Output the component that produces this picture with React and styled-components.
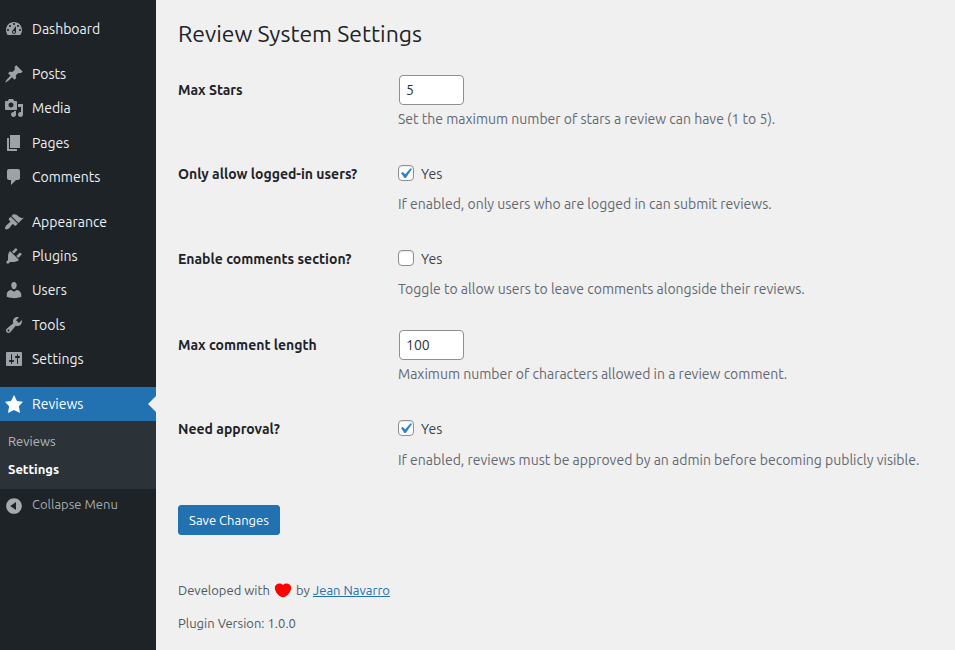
import React from 'react';
import styled, { createGlobalStyle, css } from 'styled-components';

const GlobalStyle = createGlobalStyle`
  *, *::before, *::after { box-sizing: border-box; }
  body {
    margin: 0;
    background: #f0f0f1;
    color: #3c434a;
    font-family: Ubuntu, "Noto Sans", sans-serif;
    font-size: 13px;
    line-height: 1.4;
  }
`;

const Page = styled.div`
  display: flex;
  height: 650px;
  overflow: hidden;
`;

/* ---- sidebar ---- */

const Sidebar = styled.nav`
  flex: 0 0 156px;
  padding-top: 12px;
  background: #1d2327;
`;

const MenuGroup = styled.div`
  margin-bottom: 11px;
`;

const MenuItem = styled.a`
  position: relative;
  display: flex;
  height: 34.2px;
  padding: 8px 0 8px 4px;
  gap: 8px;
  color: #f0f0f1;
  font-size: 14px;
  line-height: 18.2px;

  svg {
    flex: none;
    margin-top: -1px;
    fill: #9ca2a7;
  }

  ${({ $active }) =>
    $active &&
    css`
      background: #2271b1;
      color: #fff;

      svg { fill: #fff; }

      &::after {
        content: "";
        position: absolute;
        right: 0;
        top: 50%;
        margin-top: -8px;
        border: 8px solid transparent;
        border-left-width: 0;
        border-right-color: #f0f0f1;
      }
    `}
`;

const Submenu = styled.div`
  padding: 6px 0;
  background: #2c3338;
`;

const SubmenuItem = styled.a`
  display: block;
  padding: 5px 8px;
  font-size: 13px;
  line-height: 18.2px;
  color: ${({ $current }) => ($current ? '#fff' : '#b4b7b9')};
  font-weight: ${({ $current }) => ($current ? 600 : 400)};
`;

const CollapseButton = styled.button`
  display: flex;
  gap: 8px;
  width: 100%;
  height: 34px;
  padding: 6px 0 0 4px;
  border: 0;
  background: none;
  color: #a7aaad;
  font: 13px/18.2px Ubuntu, "Noto Sans", sans-serif;
  text-align: left;

  svg {
    flex: none;
    margin-top: 1px;
    fill: #a7aaad;
  }
`;

/* ---- content ---- */

const Content = styled.main`
  flex: 1;
  padding: 10px 0 0 22px;
`;

const Title = styled.h1`
  margin: 0;
  padding: 9px 0 4px;
  color: #1d2327;
  font-size: 23px;
  font-weight: 400;
  line-height: 29.9px;
`;

const SettingsForm = styled.form`
  display: grid;
  grid-template-rows: 84px 85px 86px 84px 85px;
  padding-top: 8px;
`;

const Row = styled.div`
  display: grid;
  grid-template-columns: 220px 1fr;
`;

const RowLabel = styled.div`
  padding-top: 20px;
  color: #1d2327;
  font-size: 14px;
  font-weight: 600;
  line-height: 18.2px;
`;

const Field = styled.div`
  padding-top: 14px;
  font-size: 14px;
  line-height: 21px;
`;

const NumberInput = styled.input`
  display: block;
  width: 65px;
  height: 30px;
  margin: 0 1px;
  padding: 0 6px;
  border: 1px solid #8c8f94;
  border-radius: 4px;
  outline: 0;
  background: #fff;
  color: #2c3338;
  font: 14px/28px Ubuntu, "Noto Sans", sans-serif;
`;

const CheckLabel = styled.label`
  display: flex;
  gap: 7px;
  padding-top: 6px;
  line-height: 18px;
`;

const CheckBox = styled.span`
  flex: none;
  width: 16px;
  height: 16px;
  border: 1px solid #8c8f94;
  border-radius: 4px;
  background: #fff;
  box-shadow: inset 0 1px 2px rgba(0, 0, 0, 0.1);

  svg {
    display: block;
    margin: -3px 0 0 -4px;
    fill: #3582c4;
  }
`;

const Description = styled.p`
  margin: ${({ $gap }) => $gap}px 0 0;
  color: #646970;
  font-size: 14px;
  line-height: 21px;
  white-space: nowrap;
`;

const SaveButton = styled.button`
  display: block;
  width: 102px;
  height: 30px;
  margin-top: 20px;
  padding: 0;
  border: 1px solid #2271b1;
  border-radius: 3px;
  background: #2271b1;
  color: #fff;
  font: 13px/28px Ubuntu, "Noto Sans", sans-serif;
`;

const Credits = styled.footer`
  display: grid;
  gap: 13px;
  margin-top: 45px;
  color: #50575e;
`;

const CreditLine = styled.div`
  display: flex;
  align-items: center;
  height: 20px;
  line-height: 20px;
  white-space: pre;

  svg { margin: 2px 4px 0 4px; }
`;

const AuthorLink = styled.a`
  color: #2271b1;
  text-decoration: underline;
`;

const icons = {
  dashboard: 'M3.76 16h12.48c1.1-1.37 1.76-3.11 1.76-5 0-4.42-3.58-8-8-8s-8 3.58-8 8c0 1.89.66 3.63 1.76 5zM10 4c.55 0 1 .45 1 1s-.45 1-1 1-1-.45-1-1 .45-1 1-1zM6 6c.55 0 1 .45 1 1s-.45 1-1 1-1-.45-1-1 .45-1 1-1zm8 0c.55 0 1 .45 1 1s-.45 1-1 1-1-.45-1-1 .45-1 1-1zm-5.37 5.55L12 7v6c0 1.1-.9 2-2 2s-2-.9-2-2c0-.57.24-1.08.63-1.45zM4 10c.55 0 1 .45 1 1s-.45 1-1 1-1-.45-1-1 .45-1 1-1zm12 0c.55 0 1 .45 1 1s-.45 1-1 1-1-.45-1-1 .45-1 1-1zm-5 3c0-.55-.45-1-1-1s-1 .45-1 1 .45 1 1 1 1-.45 1-1z',
  post: 'M10.44 3.02l1.82-1.82 6.36 6.35-1.83 1.82c-1.05-.68-2.48-.57-3.41.36l-.75.75c-.92.93-1.04 2.35-.35 3.41l-1.83 1.82-2.41-2.41-2.8 2.79c-.42.42-3.38 2.71-3.8 2.29s1.86-3.39 2.28-3.81l2.79-2.79L4.1 9.36l1.83-1.82c1.05.69 2.48.57 3.4-.36l.75-.75c.93-.92 1.05-2.35.36-3.41z',
  media: 'M13 11V4c0-.55-.45-1-1-1h-1.67L9 1H5L3.67 3H2c-.55 0-1 .45-1 1v7c0 .55.45 1 1 1h10c.55 0 1-.45 1-1zM7 4.5c1.38 0 2.5 1.12 2.5 2.5S8.38 9.5 7 9.5 4.5 8.38 4.5 7 5.62 4.5 7 4.5zM14 6h5v10.5c0 1.38-1.12 2.5-2.5 2.5S14 17.88 14 16.5s1.12-2.5 2.5-2.5c.17 0 .34.02.5.05V9h-3V6zm-4 8.05V13h2v3.5c0 1.38-1.12 2.5-2.5 2.5S7 17.88 7 16.5 8.12 14 9.5 14c.17 0 .34.02.5.05z',
  page: 'M6 15V2h10v13H6zm-1 1h8v2H3V5h2v11z',
  comments: 'M5 2h9c1.1 0 2 .9 2 2v7c0 1.1-.9 2-2 2h-2l-5 5v-5H5c-1.1 0-2-.9-2-2V4c0-1.1.9-2 2-2z',
  appearance: 'M14.48 11.06L7.41 3.99l1.5-1.5c.5-.56 2.3-.47 3.51.32 1.21.8 1.43 1.28 2.91 2.1 1.18.64 2.45 1.26 4.45.85zm-.71.71L6.7 4.7 4.93 6.47c-.39.39-.39 1.02 0 1.41l1.06 1.06c.39.39.39 1.03 0 1.42-.6.6-1.43 1.11-2.21 1.69-.35.26-.7.53-1.01.84C1.43 14.23.4 16.08 1.4 17.07c.99 1 2.84-.03 4.18-1.36.31-.31.58-.66.85-1.02.57-.78 1.08-1.61 1.69-2.21.39-.39 1.02-.39 1.41 0l1.06 1.06c.39.39 1.02.39 1.41 0z',
  plugins: 'M13.11 4.36L9.87 7.6 8 5.73l3.24-3.24c.35-.34 1.05-.2 1.56.32.52.51.66 1.21.31 1.55zm-8 1.77l.91-1.12 9.01 9.01-1.19.84c-.71.71-2.63 1.16-3.82 1.16H6.14L4.9 17.26c-.59.59-1.54.59-2.12 0-.59-.58-.59-1.53 0-2.12l1.24-1.24v-3.88c0-1.13.4-3.19 1.09-3.89zm7.26 3.97l3.24-3.24c.34-.35 1.04-.21 1.55.31.52.51.66 1.21.31 1.55l-3.24 3.25z',
  users: 'M10 9.25c-2.27 0-2.73-3.44-2.73-3.44C7 4.02 7.82 2 9.97 2c2.16 0 2.98 2.02 2.71 3.81 0 0-.41 3.44-2.68 3.44zm0 2.57L12.72 10c2.39 0 4.52 2.33 4.52 4.53v2.49s-3.65 1.13-7.24 1.13c-3.65 0-7.24-1.13-7.24-1.13v-2.49c0-2.25 1.94-4.48 4.47-4.48z',
  tools: 'M16.68 9.77c-1.34 1.34-3.3 1.67-4.95.99l-5.41 6.52c-.99.99-2.59.99-3.58 0s-.99-2.59 0-3.57l6.52-5.42c-.68-1.65-.35-3.61.99-4.95 1.28-1.28 3.12-1.62 4.72-1.06l-2.89 2.89 2.82 2.82 2.86-2.87c.53 1.58.18 3.39-1.08 4.65zM3.81 16.21c.4.39 1.04.39 1.43 0 .4-.4.4-1.04 0-1.43-.39-.4-1.03-.4-1.43 0-.39.39-.39 1.03 0 1.43z',
  settings: 'M18 16V4c0-.55-.45-1-1-1H3c-.55 0-1 .45-1 1v12c0 .55.45 1 1 1h14c.55 0 1-.45 1-1zM8 11h1c.55 0 1 .45 1 1s-.45 1-1 1H8v1.5c0 .28-.22.5-.5.5s-.5-.22-.5-.5V13H6c-.55 0-1-.45-1-1s.45-1 1-1h1V5.5c0-.28.22-.5.5-.5s.5.22.5.5V11zm5-2h-1c-.55 0-1-.45-1-1s.45-1 1-1h1V5.5c0-.28.22-.5.5-.5s.5.22.5.5V7h1c.55 0 1 .45 1 1s-.45 1-1 1h-1v5.5c0 .28-.22.5-.5.5s-.5-.22-.5-.5V9z',
  star: 'M10 1l3 6 6 .75-4.12 4.62L16 19l-6-3-6 3 1.13-6.63L1 7.75 7 7z',
  collapse: 'M10 2.16c4.33 0 7.84 3.51 7.84 7.84s-3.51 7.84-7.84 7.84S2.16 14.33 2.16 10 5.71 2.16 10 2.16zm2 11.72V6.12L6.18 9.97z',
  check: 'M14.83 4.89l1.34.94-5.81 8.38H9.02L5.78 9.67l1.34-1.25 2.57 2.4z',
};

const Icon = ({ name, size = 20 }) => (
  <svg width={size} height={size} viewBox="0 0 20 20" fillRule="evenodd" aria-hidden="true">
    <path d={icons[name]} />
  </svg>
);

const Heart = () => (
  <svg width="18" height="15" viewBox="0 0 18 15" aria-hidden="true">
    <path
      fill="#f00"
      d="M9 1.9C10.1.8 11.600.4 13 .5c2.500.2 4.300 2.200 4.200 4.600C17.100 9 12.800 14.300 9 14.300S.9 9 .8 5.100C.7 2.700 2.500.7 5 .5c1.400-.1 2.900.3 4 1.400z"
    />
  </svg>
);

const menu = [
  [['dashboard', 'Dashboard']],
  [
    ['post', 'Posts'],
    ['media', 'Media'],
    ['page', 'Pages'],
    ['comments', 'Comments'],
  ],
  [
    ['appearance', 'Appearance'],
    ['plugins', 'Plugins'],
    ['users', 'Users'],
    ['tools', 'Tools'],
    ['settings', 'Settings'],
  ],
];

const NumberRow = ({ label, value, children }) => (
  <Row>
    <RowLabel>{label}</RowLabel>
    <Field>
      <NumberInput defaultValue={value} />
      <Description $gap={4}>{children}</Description>
    </Field>
  </Row>
);

const CheckRow = ({ label, checked, gap = 11, children }) => (
  <Row>
    <RowLabel>{label}</RowLabel>
    <Field>
      <CheckLabel>
        <CheckBox role="checkbox" aria-checked={!!checked}>
          {checked && <Icon name="check" size={21} />}
        </CheckBox>
        <span>Yes</span>
      </CheckLabel>
      <Description $gap={gap}>{children}</Description>
    </Field>
  </Row>
);

export default function App() {
  return (
    <Page>
      <GlobalStyle />
      <Sidebar>
        {menu.map((group) => (
          <MenuGroup key={group[0][0]}>
            {group.map(([icon, label]) => (
              <MenuItem key={icon}>
                <Icon name={icon} />
                {label}
              </MenuItem>
            ))}
          </MenuGroup>
        ))}
        <MenuItem $active>
          <Icon name="star" />
          Reviews
        </MenuItem>
        <Submenu>
          <SubmenuItem>Reviews</SubmenuItem>
          <SubmenuItem $current>Settings</SubmenuItem>
        </Submenu>
        <CollapseButton>
          <Icon name="collapse" />
          Collapse Menu
        </CollapseButton>
      </Sidebar>
      <Content>
        <Title>Review System Settings</Title>
        <SettingsForm>
          <NumberRow label="Max Stars" value="5">
            Set the maximum number of stars a review can have (1 to 5).
          </NumberRow>
          <CheckRow label="Only allow logged-in users?" checked>
            If enabled, only users who are logged in can submit reviews.
          </CheckRow>
          <CheckRow label="Enable comments section?">
            Toggle to allow users to leave comments alongside their reviews.
          </CheckRow>
          <NumberRow label="Max comment length" value="100">
            Maximum number of characters allowed in a review comment.
          </NumberRow>
          <CheckRow label="Need approval?" checked gap={12}>
            If enabled, reviews must be approved by an admin before becoming publicly visible.
          </CheckRow>
        </SettingsForm>
        <SaveButton>Save Changes</SaveButton>
        <Credits>
          <CreditLine>
            Developed with
            <Heart />
            by <AuthorLink>Jean Navarro</AuthorLink>
          </CreditLine>
          <CreditLine>Plugin Version: 1.0.0</CreditLine>
        </Credits>
      </Content>
    </Page>
  );
}
